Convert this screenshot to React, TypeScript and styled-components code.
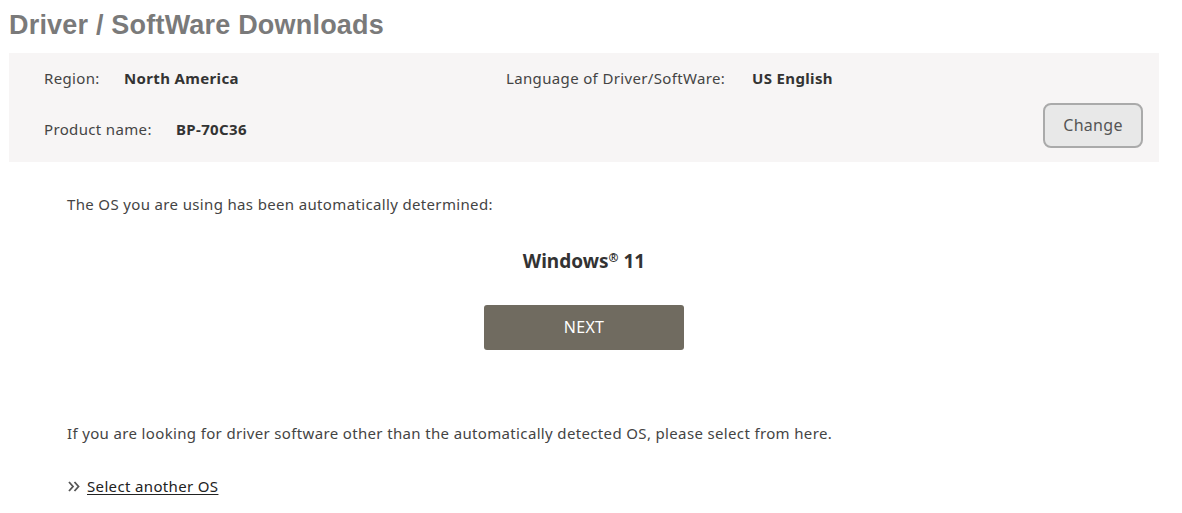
import React from "react";
import styled, { createGlobalStyle } from "styled-components";

const Global = createGlobalStyle`
  html, body { margin: 0; padding: 0; background: #fff; }
  body { font-family: "Noto Sans", Roboto, sans-serif; color: #333; }
`;

const Page = styled.div`
  width: 1150px;
  padding: 8px 0 0 9px;
`;

const Title = styled.h1`
  margin: 0;
  font-family: "Liberation Sans", Arial, sans-serif;
  font-weight: 700;
  font-size: 27px;
  line-height: 34px;
  color: #7a7a7a;
  letter-spacing: 0.2px;
`;

const InfoPanel = styled.div`
  margin-top: 11px;
  background: #f7f5f5;
  height: 109px;
  box-sizing: border-box;
  padding: 14px 16px 0 35px;
  display: grid;
  grid-template-columns: 462px 1fr auto;
  grid-template-rows: 22px 50px;
`;

const Field = styled.div<{ $row: number }>`
  grid-row: ${(p) => p.$row};
  display: flex;
  align-items: flex-start;
  font-size: 15px;
  line-height: 22px;
  letter-spacing: 0.35px;
  padding-top: ${(p) => (p.$row === 2 ? "29px" : "0")};
`;

const Label = styled.span<{ $w: number }>`
  color: #444;
  width: ${(p) => p.$w}px;
  display: inline-block;
`;

const Value = styled.span`
  font-weight: 700;
  color: #333;
`;

const ChangeCell = styled.div`
  grid-column: 3;
  grid-row: 2;
  display: flex;
  align-items: flex-start;
  padding-top: 14px;
`;

const ChangeButton = styled.button`
  width: 100px;
  height: 45px;
  box-sizing: border-box;
  border: 2px solid #aaa;
  border-radius: 8px;
  background: #e8e8e8;
  font-family: "Noto Sans", Roboto, sans-serif;
  font-size: 16px;
  letter-spacing: 0.3px;
  color: #555;
  padding: 0 0 2px;
`;

const Body = styled.div`
  padding-left: 58px;
  font-size: 15px;
  letter-spacing: 0.35px;
  color: #444;
`;

const Lead = styled.p`
  margin: 32px 0 0;
  line-height: 20px;
`;

const Detected = styled.div`
  display: flex;
  flex-direction: column;
  align-items: center;
  width: 1150px;
  margin-left: -58px;
`;

const OsName = styled.div`
  margin-top: 35px;
  font-size: 19px;
  font-weight: 700;
  color: #333;
  letter-spacing: 0;
  line-height: 24px;
  sup { font-size: 12px; vertical-align: 6px; line-height: 0; }
`;

const NextButton = styled.button`
  margin-top: 32px;
  width: 200px;
  height: 45px;
  border: none;
  border-radius: 3px;
  background: #706b60;
  color: #fff;
  font-family: "Noto Sans", Roboto, sans-serif;
  font-size: 16px;
  letter-spacing: 0.3px;
  padding: 0 0 2px;
`;

const Note = styled.p`
  margin: 73px 0 0;
  line-height: 20px;
`;

const LinkRow = styled.div`
  margin-top: 33px;
  display: flex;
  align-items: center;
  gap: 7px;
  line-height: 20px;
  padding-left: 1px;
`;

const Chevrons = styled.svg`
  width: 12px;
  height: 11px;
  flex: none;
`;

const SelectLink = styled.a`
  color: #222;
  text-decoration: underline;
  text-underline-offset: 2px;
  font-size: 15px;
`;

export default function App() {
  return (
    <>
      <Global />
      <Page>
        <Title>Driver / SoftWare Downloads</Title>
        <InfoPanel>
          <Field $row={1}>
            <Label $w={80}>Region:</Label>
            <Value>North America</Value>
          </Field>
          <Field $row={1}>
            <Label $w={246}>Language of Driver/SoftWare:</Label>
            <Value>US English</Value>
          </Field>
          <Field $row={2} style={{ gridColumn: 1 }}>
            <Label $w={132}>Product name:</Label>
            <Value>BP-70C36</Value>
          </Field>
          <ChangeCell>
            <ChangeButton>Change</ChangeButton>
          </ChangeCell>
        </InfoPanel>
        <Body>
          <Lead>The OS you are using has been automatically determined:</Lead>
          <Detected>
            <OsName>
              Windows<sup>®</sup> 11
            </OsName>
            <NextButton>NEXT</NextButton>
          </Detected>
          <Note>
            If you are looking for driver software other than the automatically detected OS, please select from here.
          </Note>
          <LinkRow>
            <Chevrons viewBox="0 0 12 11" fill="none" stroke="#555" strokeWidth="1.8">
              <polyline points="1,1 5,5.5 1,10" />
              <polyline points="6.5,1 10.5,5.5 6.5,10" />
            </Chevrons>
            <SelectLink href="#">Select another OS</SelectLink>
          </LinkRow>
        </Body>
      </Page>
    </>
  );
}
